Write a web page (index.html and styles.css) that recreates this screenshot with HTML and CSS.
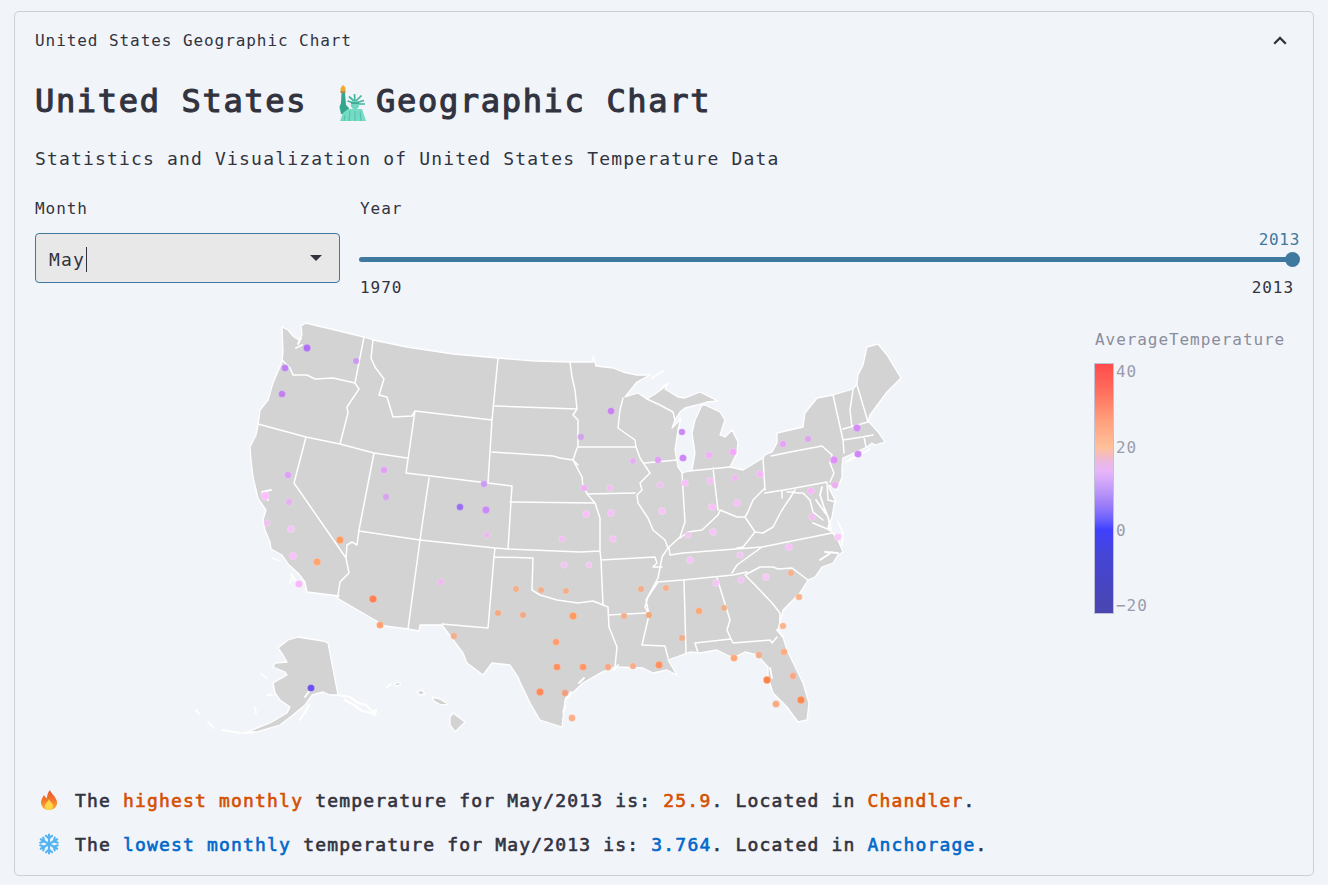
FILE: index.html
```html
<!DOCTYPE html>
<html lang="en">
<head>
<meta charset="utf-8">
<title>United States Geographic Chart</title>
<link rel="stylesheet" href="styles.css">
</head>
<body>
<section class="card">
  <header class="card-head">
    <span>United States Geographic Chart</span>
    <svg class="chevron" width="14" height="9" viewBox="0 0 14 9"><path d="M1.200 7.800 L7 2 L12.800 7.800" fill="none" stroke="#31333f" stroke-width="2.300"/></svg>
  </header>
  <div class="card-body">
    <h1 class="title"><span>United States</span> <svg class="statue" width="28" height="36" viewBox="0 0 28 36">
      <path d="M5 0 C7 1.500 8 3.500 7.500 5.500 L2.500 5.500 C2 3.500 3.500 1.500 5 0Z" fill="#f8a825"/>
      <rect x="2.500" y="5.500" width="5" height="2.500" fill="#b88a3a"/>
      <path d="M3.500 8 L7 8 L8 20 L11 23 L10 30 L3 29 L1.500 22 L3 18Z" fill="#35a58e"/>
      <path d="M17 17 L16.500 9 M17 17 L11 11.500 M17 17 L23.500 10.500 M17.500 18 L26 15.500 M17.500 19 L27 19 M16 18 L9.500 16" stroke="#45b49d" stroke-width="1.700"/>
      <circle cx="17" cy="20" r="4.200" fill="#6fd6bf"/>
      <path d="M13 18 H21" stroke="#2f9a86" stroke-width="1.400"/>
      <path d="M10 24 L24 24 L26 30 L28 36 L2 36 L5 28Z" fill="#74dcc4"/>
      <path d="M12 26 L11 36 M17 26 L17 36 M22 26 L23 36 M7 30 L6 36" stroke="#4fbfa8" stroke-width="1"/>
    </svg><span>Geographic Chart</span></h1>
    <p class="subtitle">Statistics and Visualization of United States Temperature Data</p>
    <div class="controls">
      <div class="month">
        <div class="label">Month</div>
        <div class="select"><span class="select-value">May</span><i class="caret"></i></div>
      </div>
      <div class="year">
        <div class="label">Year</div>
        <div class="slider-value">2013</div>
        <div class="track"><i class="thumb"></i></div>
        <div class="ticks"><span>1970</span><span>2013</span></div>
      </div>
    </div>
    <div class="chart">
      <svg class="map" width="730" height="425" viewBox="190 315 730 425">
        <g class="land">
          <path d="M282 327 288 330 294 337 299 340 302 335 301 326 306 323 335 330 364 337 373 340 407 347 453 354 498 358 535 361 570 362 593 362 593 356 596 366 605 367 613 368 623 372 637 375 650 375 637 382 625 397 638 393 647 399 655 394 662 389 668 383 665 389 678 397 685 398 700 392 710 397 718 401 707 402 697 405 685 408 680 412 675 420 672 428 678 422 681 418 678 430 675 450 678 467 682 473 692 470 695 453 692 433 695 420 702 405 705 405 720 412 725 420 720 435 725 437 732 430 738 442 737 453 730 467 743 470 763 458 765 455 772 452 777 443 777 433 803 427 805 413 817 398 833 395 853 389 857 384 858 375 863 365 867 347 878 344 887 355 901 378 887 392 870 415 868 422 870 423 878 432 885 442 875 445 872 443 867 447 843 458 842 467 842 477 837 490 829 485 829 488 835 500 832 517 828 527 829 530 832 532 838 540 843 552 838 555 833 563 822 567 815 577 808 580 800 593 783 610 778 630 783 637 787 650 803 683 809 703 807 720 798 722 787 707 773 693 768 677 768 667 757 655 745 652 733 658 717 650 700 653 690 652 668 660 677 675 667 670 653 673 643 668 615 667 602 672 583 683 565 700 562 727 540 720 530 703 520 682 518 677 510 665 492 663 483 675 467 663 463 653 442 625 420 625 419 631 408 629 385 626 337 598 339 596 307 592 305 582 298 573 289 565 282 555 271 549 270 542 265 530 263 520 266 510 258 498 253 477 251 460 250 447 256 435 258 425 260 410 268 400 273 383 282 362 283 352Z"/>
          <path d="M278 648 288 640 298 637 323 641 328 643 338 695 330 695 323 692 312 695 305 705 293 715 280 725 253 733 247 732 270 723 287 713 290 707 280 700 275 693 273 683 287 675 285 672 273 667 275 663 287 662 283 655Z"/>
          <path d="M450 717 453 713 465 722 455 732 450 725Z"/>
          <path d="M394 684 400 682 400 685 396 686Z"/>
          <path d="M417 692 422 690 425 694 420 695Z"/>
          <path d="M432 697 440 699 448 704 441 705 434 701Z"/>
        </g>
        <path class="borders" d="M282 360 290 368 293 375 307 375 315 379 333 378 355 383M364 337 355 383 359 389 347 407 348 413 340 444M373 340 371 358 375 367 384 379 379 395 387 397 393 417 412 416 415 411 406 473M258 424 306 437 340 444 374 453 407 458M415 411 492 420M498 358 492 420 488 483M406 473 488 483 512 486 508 549M374 453 359 530 357 545 352 542 347 545 346 558 349 573 340 582 338 595M429 478 420 540 408 629M359 531 420 540 495 548 508 549 580 552 600 551M306 437 294 483 346 558M495 548 494 557 533 558 532 590 540 595 557 600 578 603 593 601 603 605 608 607 609 627 617 647 615 667M494 557 488 628 442 624M510 502 595 503M492 452 553 456 560 458 573 460 578 465M495 406 577 409M570 362 572 377 575 390 577 409 573 415 578 420 578 447 636 447M577 448 573 460 582 477 583 487 588 495 595 503 600 518 600 551M587 494 635 493M600 551 601 560 655 557 657 563 653 567 662 567M601 560 603 605M608 615 646 613M669 548 670 555 683 553 762 547 832 533M658 582 648 597 645 607 649 615 642 645 665 646 668 658M668 548 662 557 658 578 646 600 649 615M657 582 683 580 733 575 747 572M732 573 737 565 762 547M745 575 760 567 773 567 778 569 792 568 808 580M745 575 755 585 772 603 780 613 780 623M684 580 686 653M717 578 730 620 727 630 731 639M695 643 731 639 733 643 770 640 772 643 777 637M695 643 698 653M645 463 677 460M636 447 640 458 650 473 640 483 642 490 637 495 638 503 648 518 653 530 665 540 668 548M623 398 620 410 618 428 635 440 636 447M682 473 685 522 680 537 668 548M680 538 688 532 702 530 718 515 720 510 737 517 745 517 755 532 743 547 737 548M713 468 718 510M689 471 730 467M763 458 765 490M745 517 748 512 753 500 765 488M771 456 790 452 822 446 832 455 830 463 834 473 830 482M765 493 790 489 827 482M755 532 763 533 773 527 782 510 790 498 795 490M782 491 782 498M787 492 793 492 797 493 803 493 810 500 813 512 823 520M833 395 843 440 844 453M853 390 850 410 852 428M857 385 868 422M843 429 868 422M843 440 862 437 873 435M864 437 866 447M827 483 828 500 836 502M647 399 660 405 673 412 675 420"/>
        <path class="water" d="M298 344 301 338M296 348 302 345M262 492 271 490M268 500 262 494M272 558 280 561M291 574 295 580M290 583 292 578M652 378 663 371M662 388 668 383M846 462 870 449M822 487 820 495 824 507 828 517 831 530M816 500 826 514M813 523 830 530M825 552 838 553M820 560 832 552M838 522 843 533 842 545M196 710 199 714M208 722 214 728M222 730 240 733M243 733 255 732M261 674 267 678M255 708 256 713M267 695 272 695M300 720 308 707M305 697 310 690M387 687 391 684M614 670 618 665M579 683 584 678M566 698 571 692M563 712 566 706M777 630 783 637M770 668 772 678"/>
        <path class="coast" d="M338 695 350 697 358 703 366 705 373 712 376 710 375 715 368 712 362 711 354 705 345 700M305 713 309 705"/>
        <g class="dots">
          <circle cx="307" cy="348" r="3.7" fill="#b070f5"/><circle cx="356" cy="361" r="3.2" fill="#c89af0"/><circle cx="285" cy="368" r="3.5" fill="#c080f0"/><circle cx="282" cy="394" r="3.5" fill="#c080f0"/><circle cx="288" cy="475" r="3.5" fill="#dca0f5"/><circle cx="265" cy="496" r="4.2" fill="#fcc0fc"/><circle cx="289" cy="502" r="3.4" fill="#e5b0f0"/><circle cx="267" cy="523" r="3.2" fill="#f0c0f0"/><circle cx="291" cy="529" r="3.5" fill="#f5c5f8"/><circle cx="293" cy="556" r="3.7" fill="#fac0fa"/><circle cx="299" cy="584" r="3.6" fill="#fbb5fb"/><circle cx="317" cy="562" r="3.8" fill="#ffa570"/><circle cx="340" cy="540" r="3.7" fill="#ff9a60"/><circle cx="384" cy="470" r="3.5" fill="#e0a0f8"/><circle cx="386" cy="497" r="3.4" fill="#d5a5ec"/><circle cx="484" cy="484" r="3.4" fill="#cc9cf0"/><circle cx="460" cy="507" r="3.5" fill="#9a70ef"/><circle cx="486" cy="510" r="3.7" fill="#cc88f8"/><circle cx="487" cy="535" r="3.2" fill="#eab8ee"/><circle cx="441" cy="582" r="3.3" fill="#efb8f0"/><circle cx="373" cy="599" r="3.8" fill="#ff8050"/><circle cx="380" cy="625" r="3.5" fill="#ffa070"/><circle cx="454" cy="636" r="3.4" fill="#f0b090"/><circle cx="516" cy="589" r="3.3" fill="#f0b08e"/><circle cx="498" cy="613" r="3.3" fill="#f4aa80"/><circle cx="523" cy="615" r="3.3" fill="#f0aa88"/><circle cx="541" cy="590" r="3.3" fill="#f0b090"/><circle cx="566" cy="591" r="3.3" fill="#f0b090"/><circle cx="573" cy="616" r="3.8" fill="#ff9a60"/><circle cx="562" cy="539" r="3.2" fill="#f0c0f0"/><circle cx="564" cy="565" r="3.3" fill="#f2c5f2"/>
          <circle cx="611" cy="411" r="3.5" fill="#c880f0"/><circle cx="581" cy="437" r="3.4" fill="#cfa5e8"/><circle cx="633" cy="461" r="3.3" fill="#e5b0f0"/><circle cx="658" cy="460" r="3.4" fill="#e0a0f5"/><circle cx="682" cy="432" r="3.3" fill="#cc88f5"/><circle cx="683" cy="458" r="3.6" fill="#cc88f8"/><circle cx="709" cy="455" r="3.5" fill="#f0b0f5"/><circle cx="733" cy="452" r="3.6" fill="#f5a8f8"/><circle cx="783" cy="444" r="3.5" fill="#e5a5f5"/><circle cx="808" cy="439" r="3.3" fill="#dca5ec"/><circle cx="857" cy="428" r="3.7" fill="#d58cf8"/><circle cx="858" cy="454" r="3.6" fill="#cf88f5"/><circle cx="834" cy="460" r="3.8" fill="#e090f8"/><circle cx="835" cy="485" r="3.4" fill="#ebb0f0"/><circle cx="811" cy="491" r="3.6" fill="#f8b8f8"/><circle cx="812" cy="517" r="3.4" fill="#f0c0f0"/><circle cx="838" cy="537" r="3.6" fill="#fcc8fc"/><circle cx="789" cy="547" r="3.6" fill="#f8c0f8"/><circle cx="760" cy="474" r="3.5" fill="#f5b5f8"/><circle cx="735" cy="478" r="3.3" fill="#f0b8f0"/><circle cx="737" cy="503" r="3.5" fill="#f8c0f8"/><circle cx="710" cy="481" r="3.4" fill="#f4c0f4"/><circle cx="712" cy="507" r="3.5" fill="#f8c0f8"/><circle cx="685" cy="483" r="3.5" fill="#f8c0f8"/><circle cx="660" cy="485" r="3.3" fill="#f0c0f0"/><circle cx="662" cy="511" r="3.5" fill="#f8c4f8"/><circle cx="584" cy="488" r="3.3" fill="#f0b0f5"/><circle cx="610" cy="488" r="3.3" fill="#f0c0f0"/><circle cx="586" cy="514" r="3.5" fill="#f8c0f8"/><circle cx="611" cy="513" r="3.6" fill="#f8c0f8"/><circle cx="613" cy="539" r="3.4" fill="#f4c4f4"/><circle cx="589" cy="565" r="3.2" fill="#f0c8f0"/><circle cx="688" cy="535" r="3.3" fill="#f0c8f0"/><circle cx="713" cy="532" r="3.5" fill="#f8c4f8"/><circle cx="690" cy="560" r="3.5" fill="#f8c4f8"/><circle cx="740" cy="555" r="3.3" fill="#f4c4f4"/><circle cx="716" cy="583" r="3.4" fill="#f8c4f8"/><circle cx="741" cy="580" r="3.3" fill="#f2c4f2"/><circle cx="766" cy="577" r="3.5" fill="#f8c8f8"/><circle cx="791" cy="573" r="3.3" fill="#f2b48e"/><circle cx="799" cy="597" r="3.3" fill="#fab48c"/><circle cx="783" cy="626" r="3.3" fill="#fcb48c"/><circle cx="641" cy="589" r="3.3" fill="#f2ae8c"/><circle cx="666" cy="588" r="3.3" fill="#f4b090"/><circle cx="624" cy="616" r="3.3" fill="#f2b090"/><circle cx="649" cy="615" r="3.3" fill="#f0aa80"/><circle cx="699" cy="611" r="3.5" fill="#faa874"/><circle cx="724" cy="608" r="3.2" fill="#f2b088"/>
          <circle cx="556" cy="642" r="3.5" fill="#ff9d70"/><circle cx="557" cy="667" r="3.6" fill="#ff9060"/><circle cx="583" cy="667" r="3.6" fill="#ff9668"/><circle cx="608" cy="667" r="3.4" fill="#f8a888"/><circle cx="633" cy="666" r="3.3" fill="#f8ae8c"/><circle cx="659" cy="665" r="3.7" fill="#ff9060"/><circle cx="682" cy="638" r="3.3" fill="#f2ae8c"/><circle cx="734" cy="658" r="3.5" fill="#ffa878"/><circle cx="759" cy="655" r="3.4" fill="#f2ae8c"/><circle cx="784" cy="652" r="3.4" fill="#fcac80"/><circle cx="793" cy="676" r="3.4" fill="#f8a888"/><circle cx="801" cy="700" r="3.8" fill="#ff8850"/><circle cx="767" cy="680" r="3.7" fill="#ff8248"/><circle cx="776" cy="704" r="3.5" fill="#fda880"/><circle cx="540" cy="692" r="3.7" fill="#ff8858"/><circle cx="565" cy="693" r="3.4" fill="#f0a080"/><circle cx="572" cy="718" r="3.4" fill="#fcae88"/><circle cx="311" cy="688" r="3.6" fill="#7050f0"/>
        </g>
      </svg>
      <aside class="legend">
        <div class="legend-title">AverageTemperature</div>
        <div class="scale">
          <div class="bar"></div>
          <span class="tick tick-40">40</span>
          <span class="tick tick-20">20</span>
          <span class="tick tick-0">0</span>
          <span class="tick tick-n20">−20</span>
        </div>
      </aside>
    </div>
    <p class="note"><svg class="emoji" width="20" height="22" viewBox="0 0 20 22">
      <defs><linearGradient id="flame" x1="0" y1="0" x2="0" y2="1"><stop offset="0" stop-color="#e8552d"/><stop offset=".55" stop-color="#f57c2b"/><stop offset="1" stop-color="#fdb43a"/></linearGradient></defs>
      <path d="M11 1 C12 5 17 7 18 13 C18.500 18 14.500 21 10 21 C5.500 21 2 18 2 13.500 C2 10 4 8 5 6 C6 8 7 9 8 9 C8 6 9 3 11 1Z" fill="url(#flame)"/>
      <path d="M10 10 C11 13 14 14 14 17 C14 19.500 12 21 10 21 C8 21 6 19.500 6 17 C6 14.500 9 13 10 10Z" fill="#ffd64a"/>
    </svg><span class="note-text">The <b class="hot">highest monthly</b> temperature for May/2013 is: <b class="hot">25.9</b>. Located in <b class="hot">Chandler</b>.</span></p>
    <p class="note"><svg class="emoji" width="20" height="22" viewBox="0 0 20 22">
      <g fill="none" stroke="#54b4f2" stroke-width="2.100" stroke-linecap="round">
        <path d="M10 1.500V20.500M1.800 6.250 18.200 15.750M1.800 15.750 18.200 6.250"/>
        <path d="M7 2.800 10 5.500 13 2.800M7 19.200 10 16.500 13 19.200M1.300 9.700 5.200 8.300 4.300 4.600M18.700 9.700 14.800 8.300 15.700 4.600M1.300 12.300 5.200 13.700 4.300 17.400M18.700 12.300 14.800 13.700 15.700 17.400"/>
      </g>
    </svg><span class="note-text">The <b class="cold">lowest monthly</b> temperature for May/2013 is: <b class="cold">3.764</b>. Located in <b class="cold">Anchorage</b>.</span></p>
  </div>
</section>
</body>
</html>
```
FILE: styles.css
```css
* { box-sizing: border-box; }
html, body { margin: 0; }
body {
  background: #f1f4f9;
  padding: 11px 14px 9px;
  color: #31333f;
  font-family: "DejaVu Sans Mono", "Liberation Mono", monospace;
  font-size: 16px;
  letter-spacing: .93px;
}
.card {
  border: 1px solid #ccd0d8;
  border-radius: 5px;
  height: 865px;
}
.card-head {
  height: 56px;
  padding: 0 26px 0 20px;
  display: flex;
  align-items: center;
  justify-content: space-between;
}
.card-body { padding: 0 20px; }
.title {
  margin: 11px 0 0;
  font-size: 32px;
  line-height: 44px;
  font-weight: normal;
  -webkit-text-stroke: 1.15px #31333f;
  letter-spacing: 1.67px;
  white-space: nowrap;
}
.statue { margin: 0 10px 0 10px; vertical-align: -9px; }
.subtitle {
  margin: 22px 0 0;
  font-size: 18px;
  line-height: 28px;
  letter-spacing: 1.17px;
  white-space: nowrap;
}
.controls { display: flex; gap: 20px; margin-top: 24px; height: 101px; }
.month { width: 305px; flex: none; }
.year { flex: 1; min-width: 0; }
.label { line-height: 24px; }
.select {
  margin-top: 12px;
  height: 50px;
  padding: 2px 17px 0 13px;
  background: #e8e8e8;
  border: 1px solid #40799f;
  border-radius: 4px;
  display: flex;
  align-items: center;
  justify-content: space-between;
  font-size: 18px;
  letter-spacing: 1.16px;
}
.select-value { border-right: 1px solid #31333f; line-height: 25px; padding-right: 1px; }
.caret {
  width: 0;
  height: 0;
  margin-top: -2px;
  border-left: 6px solid transparent;
  border-right: 6px solid transparent;
  border-top: 6px solid #31333f;
}
.slider-value {
  margin: 9px -7px 0 0;
  line-height: 20px;
  text-align: right;
  color: #40799f;
  letter-spacing: .7px;
}
.track {
  position: relative;
  margin: 7px 0 0 -1px;
  height: 5px;
  border-radius: 3px;
  background: #40799f;
}
.thumb {
  position: absolute;
  right: -7px;
  top: -5px;
  width: 15px;
  height: 15px;
  border-radius: 50%;
  background: #40799f;
}
.ticks {
  display: flex;
  justify-content: space-between;
  margin: 16px -1px 0 0;
  line-height: 20px;
}
.chart { display: flex; height: 425px; margin-top: 17px; }
.map { margin-left: 155px; flex: none; display: block; }
.land path { fill: #d3d3d3; stroke: #fff; stroke-width: 1.300; stroke-linejoin: round; }
.borders, .water, .coast { fill: none; stroke: #fff; stroke-width: 1.500; stroke-linejoin: round; stroke-linecap: round; }
.water { stroke-width: 1.800; }
.coast { stroke-width: 2.200; }
.dots circle { stroke: rgba(255, 255, 255, .25); stroke-width: .8; }
.legend { margin-left: 174px; padding-top: 13px; flex: none; width: 220px; color: #8b8d9d; }
.legend-title { line-height: 24px; padding-left: 1px; white-space: nowrap; }
.scale { position: relative; margin-top: 11px; height: 251px; }
.bar {
  width: 20px;
  height: 251px;
  border: 1px solid #c0c2d6;
  background: linear-gradient(to bottom, #ff4b4b 0%, #ff7260 12%, #ffa07e 23%, #ffc09a 33.500%, #ecb8dc 39%, #e8b5fb 43%, #c8a0f8 49%, #a080f8 56%, #6a60ff 62.500%, #4040ff 66.500%, #4545d8 76%, #4a46b0 100%);
}
.tick { position: absolute; left: 22px; line-height: 18px; color: #9a9cac; }
.tick-40 { top: 0; }
.tick-20 { top: 76px; }
.tick-0 { top: 159px; }
.tick-n20 { top: 234px; }
.note {
  margin: 46px 0 0;
  display: flex;
  align-items: center;
  height: 28px;
  font-size: 18px;
  letter-spacing: 1.17px;
  -webkit-text-stroke: .6px #31333f;
  white-space: nowrap;
}
.note + .note { margin-top: 16px; }
.emoji { margin-left: 4px; width: 20px; flex: none; }
.note-text { margin-left: 16px; }
.note b { font-weight: normal; }
.hot { color: #d55000; -webkit-text-stroke-color: #d55000; }
.cold { color: #0068c9; -webkit-text-stroke-color: #0068c9; }
```
